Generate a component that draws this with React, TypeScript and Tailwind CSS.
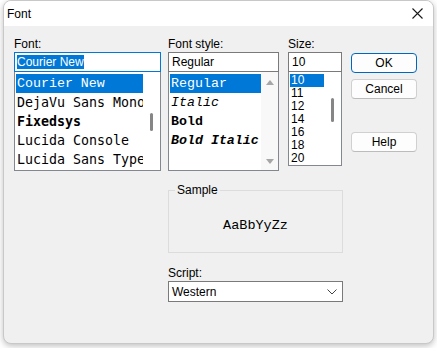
import React from "react";

const fontRows: { label: string; cls: string }[] = [
  { label: "Courier New", cls: "font-['Liberation_Mono',monospace]" },
  { label: "DejaVu Sans Mono", cls: "font-['DejaVu_Sans_Mono',monospace]" },
  { label: "Fixedsys", cls: "font-['DejaVu_Sans_Mono',monospace] font-bold" },
  { label: "Lucida Console", cls: "font-['DejaVu_Sans_Mono',monospace]" },
  { label: "Lucida Sans Typewriter", cls: "font-['DejaVu_Sans_Mono',monospace]" },
];

const styleRows: { label: string; cls: string }[] = [
  { label: "Regular", cls: "" },
  { label: "Italic", cls: "italic" },
  { label: "Bold", cls: "font-bold" },
  { label: "Bold Italic", cls: "font-bold italic" },
];

const sizes = ["10", "11", "12", "14", "16", "18", "20"];

export default function App() {
  return (
    <div className="w-[437px] h-[348px] bg-white">
      <div className="ml-[3px] w-[431px] h-[344px] rounded-[8px] border border-[#c8c8c8] bg-[#f0f0f0] overflow-hidden shadow-[0_2px_6px_rgba(0,0,0,0.25)] flex flex-col font-['Liberation_Sans',Arial,sans-serif] text-[12px] text-black">
        {/* Title bar */}
        <div className="h-[25px] bg-white flex items-center justify-between pl-[3px] pr-[10px]">
          <span className="leading-[16px]">Font</span>
          <svg width="11" height="11" viewBox="0 0 11 11">
            <path d="M0.5 0.5 L10.5 10.5 M10.5 0.5 L0.5 10.5" stroke="#1a1a1a" strokeWidth="1.1" />
          </svg>
        </div>

        {/* Body */}
        <div className="pl-[10px] pt-[10px]">
          <div className="flex">
            {/* Font column */}
            <div className="w-[147px] flex flex-col">
              <div className="h-[16px] leading-[16px]">Font:</div>
              <div className="h-[20px] border border-[#0078d7] bg-white flex items-center px-[2px]">
                <span className="bg-[#0078d7] text-white leading-[14px] h-[14px]">Courier New</span>
              </div>
              <div className="h-[99px] border border-t-0 border-[#828790] bg-white flex">
                <div className="flex-1 pl-[1px] pt-[2px] overflow-hidden">
                  {fontRows.map((r, i) => (
                    <div
                      key={r.label}
                      className={`h-[19px] leading-[19px] text-[13.3px] whitespace-nowrap pl-[1px] ${r.cls} ${i === 0 ? "bg-[#0078d7] text-white" : ""}`}
                    >
                      {r.label}
                    </div>
                  ))}
                </div>
                <div className="w-[17px] flex flex-col items-center">
                  <div className="mt-[41px] w-[3px] h-[18px] rounded-full bg-[#868686]" />
                </div>
              </div>
            </div>

            {/* Font style column */}
            <div className="ml-[7px] w-[111px] flex flex-col">
              <div className="h-[16px] leading-[16px]">Font style:</div>
              <div className="h-[20px] border border-[#7a7a7a] bg-white flex items-center px-[3px]">
                <span className="leading-[14px]">Regular</span>
              </div>
              <div className="h-[99px] border border-t-0 border-[#828790] bg-white flex">
                <div className="flex-1 pl-[1px] pt-[2px] overflow-hidden">
                  {styleRows.map((r, i) => (
                    <div
                      key={r.label}
                      className={`h-[19px] leading-[19px] text-[13.3px] whitespace-nowrap pl-[1px] font-['Liberation_Mono',monospace] ${r.cls} ${i === 0 ? "bg-[#0078d7] text-white" : ""}`}
                    >
                      {r.label}
                    </div>
                  ))}
                </div>
                <div className="w-[17px] bg-[#f8f8f8] flex flex-col items-center justify-between pt-[8px] pb-[6px]">
                  <svg width="8" height="5" viewBox="0 0 8 5">
                    <path d="M0 5 L4 0 L8 5 Z" fill="#a6a6a6" />
                  </svg>
                  <svg width="8" height="5" viewBox="0 0 8 5">
                    <path d="M0 0 L8 0 L4 5 Z" fill="#a6a6a6" />
                  </svg>
                </div>
              </div>
            </div>

            {/* Size column */}
            <div className="ml-[9px] w-[54px] flex flex-col">
              <div className="h-[16px] leading-[16px]">Size:</div>
              <div className="h-[20px] border border-[#7a7a7a] bg-white flex items-center px-[3px]">
                <span className="leading-[14px]">10</span>
              </div>
              <div className="h-[94px] border border-t-0 border-[#828790] bg-white flex">
                <div className="flex-1 pl-[1px] pt-[2px] overflow-hidden">
                  {sizes.map((s, i) => (
                    <div
                      key={s}
                      className={`h-[13px] leading-[13px] pl-[1px] ${i === 0 ? "bg-[#0078d7] text-white" : ""}`}
                    >
                      {s}
                    </div>
                  ))}
                </div>
                <div className="w-[17px] flex flex-col items-center">
                  <div className="mt-[26px] w-[3px] h-[24px] rounded-full bg-[#868686]" />
                </div>
              </div>
            </div>

            {/* Buttons */}
            <div className="ml-[9px] w-[66px] flex flex-col pt-[17px]">
              <button className="h-[20px] rounded-[4px] border border-[#0067c0] bg-[#fdfdfd] flex items-center justify-center">
                OK
              </button>
              <button className="mt-[6px] h-[20px] rounded-[4px] border border-[#d0d0d0] border-b-[#bcbcbc] bg-[#fdfdfd] flex items-center justify-center">
                Cancel
              </button>
              <button className="mt-[33px] h-[20px] rounded-[4px] border border-[#d0d0d0] border-b-[#bcbcbc] bg-[#fdfdfd] flex items-center justify-center">
                Help
              </button>
            </div>
          </div>

          {/* Sample + Script */}
          <div className="ml-[154px] w-[175px] flex flex-col">
            <fieldset className="mt-[11px] h-[71px] border border-[#dcdcdc]">
              <legend className="ml-[6px] px-[2px] leading-[16px]">Sample</legend>
              <div className="pt-[20px] text-center leading-[16px] text-[13.5px] font-['Liberation_Mono',monospace]">
                AaBbYyZz
              </div>
            </fieldset>
            <div className="mt-[12px] h-[16px] leading-[16px]">Script:</div>
            <div className="h-[21px] border border-[#7a7a7a] bg-white flex items-center justify-between pl-[3px] pr-[5px]">
              <span className="leading-[14px]">Western</span>
              <svg width="10" height="6" viewBox="0 0 10 6">
                <path d="M0.5 0.5 L5 5 L9.5 0.5" stroke="#444" strokeWidth="1" fill="none" />
              </svg>
            </div>
          </div>
        </div>
      </div>
    </div>
  );
}
